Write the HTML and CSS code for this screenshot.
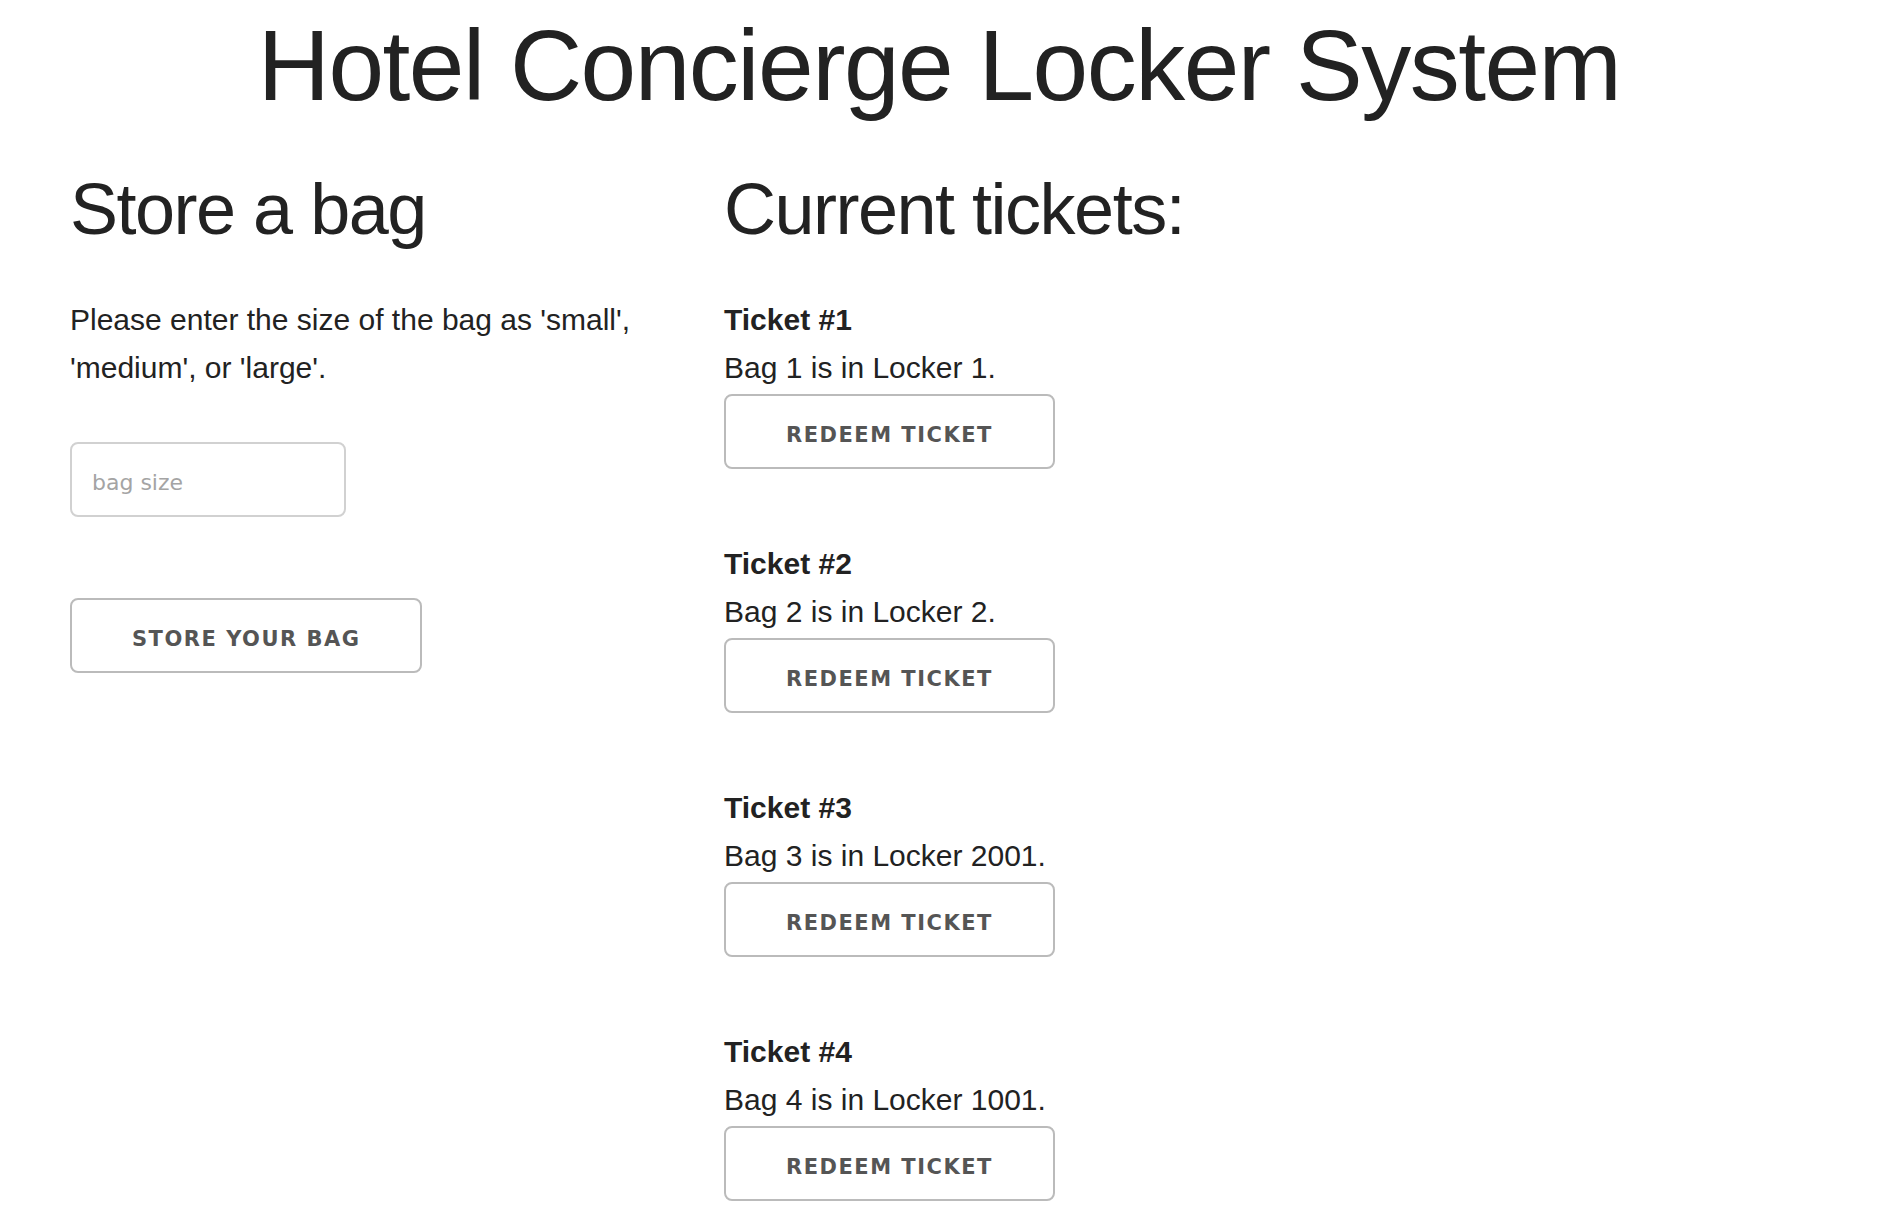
FILE: index.html
```html
<!DOCTYPE html>
<html lang="en">
<head>
<meta charset="utf-8">
<title>Hotel Concierge Locker System</title>
<link rel="stylesheet" href="styles.css">
</head>
<body>
<h1 class="title">Hotel Concierge Locker System</h1>
<div class="columns">
  <section class="store">
    <h3 class="heading">Store a bag</h3>
    <p class="intro">Please enter the size of the bag as 'small', 'medium', or 'large'.</p>
    <input class="size-input" type="text" placeholder="bag size">
    <button class="btn store-btn" type="button">Store your bag</button>
  </section>
  <section class="tickets">
    <h3 class="heading">Current tickets:</h3>
    <div class="ticket">
      <div class="ticket-name">Ticket #1</div>
      <div class="ticket-text">Bag 1 is in Locker 1.</div>
      <button class="btn redeem-btn" type="button">Redeem ticket</button>
    </div>
    <div class="ticket">
      <div class="ticket-name">Ticket #2</div>
      <div class="ticket-text">Bag 2 is in Locker 2.</div>
      <button class="btn redeem-btn" type="button">Redeem ticket</button>
    </div>
    <div class="ticket">
      <div class="ticket-name">Ticket #3</div>
      <div class="ticket-text">Bag 3 is in Locker 2001.</div>
      <button class="btn redeem-btn" type="button">Redeem ticket</button>
    </div>
    <div class="ticket">
      <div class="ticket-name">Ticket #4</div>
      <div class="ticket-text">Bag 4 is in Locker 1001.</div>
      <button class="btn redeem-btn" type="button">Redeem ticket</button>
    </div>
  </section>
</div>
</body>
</html>
```

FILE: styles.css
```css
html, body {
  margin: 0;
  padding: 0;
  background: #fff;
}

body {
  font-family: "Liberation Sans", Arial, Helvetica, sans-serif;
  color: #222;
  font-size: 30px;
  line-height: 48px;
}

.title {
  margin: 5px 0 0;
  font-size: 100px;
  line-height: 120px;
  font-weight: 400;
  letter-spacing: -1.5px;
  text-align: center;
  padding-right: 26px;
}

.columns {
  display: flex;
  align-items: flex-start;
  gap: 54px;
  padding-left: 70px;
  margin-top: 38px;
}

.store {
  width: 600px;
  display: flex;
  flex-direction: column;
  align-items: flex-start;
}

.tickets {
  display: flex;
  flex-direction: column;
  align-items: flex-start;
}

.heading {
  margin: 0 0 39px;
  font-size: 72px;
  line-height: 1.3;
  font-weight: 400;
  letter-spacing: -1.5px;
}

.intro {
  margin: 0 0 50px;
}

.size-input {
  box-sizing: border-box;
  width: 276px;
  height: 75px;
  padding: 15px 20px 9px;
  border: 2px solid #d1d1d1;
  border-radius: 8px;
  font-family: "DejaVu Sans", sans-serif;
  font-size: 22px;
  color: #333;
  background: #fff;
  outline: none;
  margin: 0;
}

.size-input::placeholder {
  color: #a4a4a4;
}

.btn {
  box-sizing: border-box;
  height: 75px;
  padding: 7px 60px 0;
  border: 2px solid #bbb;
  border-radius: 8px;
  background: transparent;
  color: #555;
  font-family: "DejaVu Sans", sans-serif;
  font-size: 21px;
  font-weight: 700;
  letter-spacing: 1.5px;
  text-transform: uppercase;
  white-space: nowrap;
  cursor: pointer;
}

.store-btn {
  margin-top: 81px;
}

.ticket {
  display: flex;
  flex-direction: column;
  align-items: flex-start;
  margin-bottom: 71px;
}

.ticket:last-child {
  margin-bottom: 0;
}

.ticket-name {
  font-weight: 700;
}

.redeem-btn {
  margin-top: 2px;
}
```
